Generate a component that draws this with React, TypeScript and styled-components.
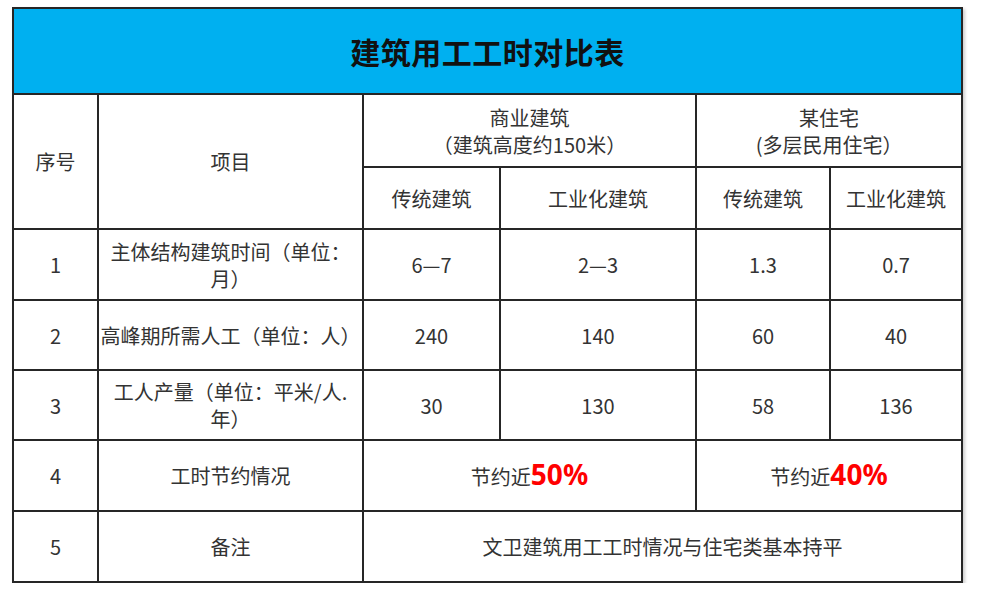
import React from 'react';
import styled, { createGlobalStyle } from 'styled-components';

const GlobalStyle = createGlobalStyle`
  html, body {
    margin: 0;
    padding: 0;
    background: #ffffff;
  }
  body {
    font-family: "Noto Sans CJK SC", "Noto Sans", sans-serif;
    color: #333333;
  }
`;

type Row = {
  no: string;
  item: React.ReactNode;
  values: string[];
};

const rows: Row[] = [
  {
    no: '1',
    item: (
      <>
        主体结构建筑时间（单位：
        <br />
        月）
      </>
    ),
    values: ['6—7', '2—3', '1.3', '0.7'],
  },
  {
    no: '2',
    item: '高峰期所需人工（单位：人）',
    values: ['240', '140', '60', '40'],
  },
  {
    no: '3',
    item: (
      <>
        工人产量（单位：平米/人.
        <br />
        年）
      </>
    ),
    values: ['30', '130', '58', '136'],
  },
];

const colWidths = [85, 265, 137, 196, 134, 132];

const App: React.FC = () => {
  return (
    <Page>
      <GlobalStyle />
      <Table>
        <colgroup>
          {colWidths.map((w, i) => (
            <col key={i} style={{ width: w }} />
          ))}
        </colgroup>
        <thead>
          <tr>
            <Title colSpan={6}>建筑用工工时对比表</Title>
          </tr>
          <tr>
            <HeadCell rowSpan={2} h={73}>
              序号
            </HeadCell>
            <HeadCell rowSpan={2} h={73}>
              项目
            </HeadCell>
            <HeadCell colSpan={2} h={73}>
              商业建筑
              <br />
              （建筑高度约150米）
            </HeadCell>
            <HeadCell colSpan={2} h={73}>
              某住宅
              <br />
              (多层民用住宅）
            </HeadCell>
          </tr>
          <tr>
            <HeadCell h={62}>传统建筑</HeadCell>
            <HeadCell h={62}>工业化建筑</HeadCell>
            <HeadCell h={62}>传统建筑</HeadCell>
            <HeadCell h={62}>工业化建筑</HeadCell>
          </tr>
        </thead>
        <tbody>
          {rows.map((r, idx) => (
            <tr key={r.no}>
              <Cell h={idx === 0 ? 71 : 70}>{r.no}</Cell>
              <Cell>{r.item}</Cell>
              {r.values.map((v, i) => (
                <Cell key={i}>{v}</Cell>
              ))}
            </tr>
          ))}
          <tr>
            <Cell h={71}>4</Cell>
            <Cell>工时节约情况</Cell>
            <Cell colSpan={2}>
              节约近<Highlight>50%</Highlight>
            </Cell>
            <Cell colSpan={2}>
              节约近<Highlight>40%</Highlight>
            </Cell>
          </tr>
          <tr>
            <Cell h={71}>5</Cell>
            <Cell>备注</Cell>
            <Cell colSpan={4}>文卫建筑用工工时情况与住宅类基本持平</Cell>
          </tr>
        </tbody>
      </Table>
    </Page>
  );
};

export default App;

const Page = styled.div`
  padding: 7px 0 0 12px;
`;

const Table = styled.table`
  border-collapse: collapse;
  table-layout: fixed;
  width: 951px;
  box-shadow: 2px 2px 3px rgba(0, 0, 0, 0.2);
`;

const Title = styled.th`
  height: 84px;
  padding: 0;
  background: #00b0f0;
  border: 2px solid #262626;
  font-size: 30px;
  font-weight: 700;
  color: #111111;
  text-align: center;
  vertical-align: middle;
  letter-spacing: 0.5px;
`;

const Cell = styled.td<{ h?: number }>`
  ${({ h }) => (h ? `height: ${h - 2}px;` : '')}
  padding: 0;
  border: 2px solid #262626;
  font-size: 20px;
  line-height: 27px;
  font-weight: 400;
  color: #333333;
  text-align: center;
  vertical-align: middle;
  white-space: nowrap;
`;

const HeadCell = styled(Cell).attrs({ as: 'th' })``;

const Highlight = styled.span`
  font-size: 28px;
  font-weight: 700;
  color: #ff0000;
  font-family: "Noto Sans", "Noto Sans CJK SC", sans-serif;
`;
